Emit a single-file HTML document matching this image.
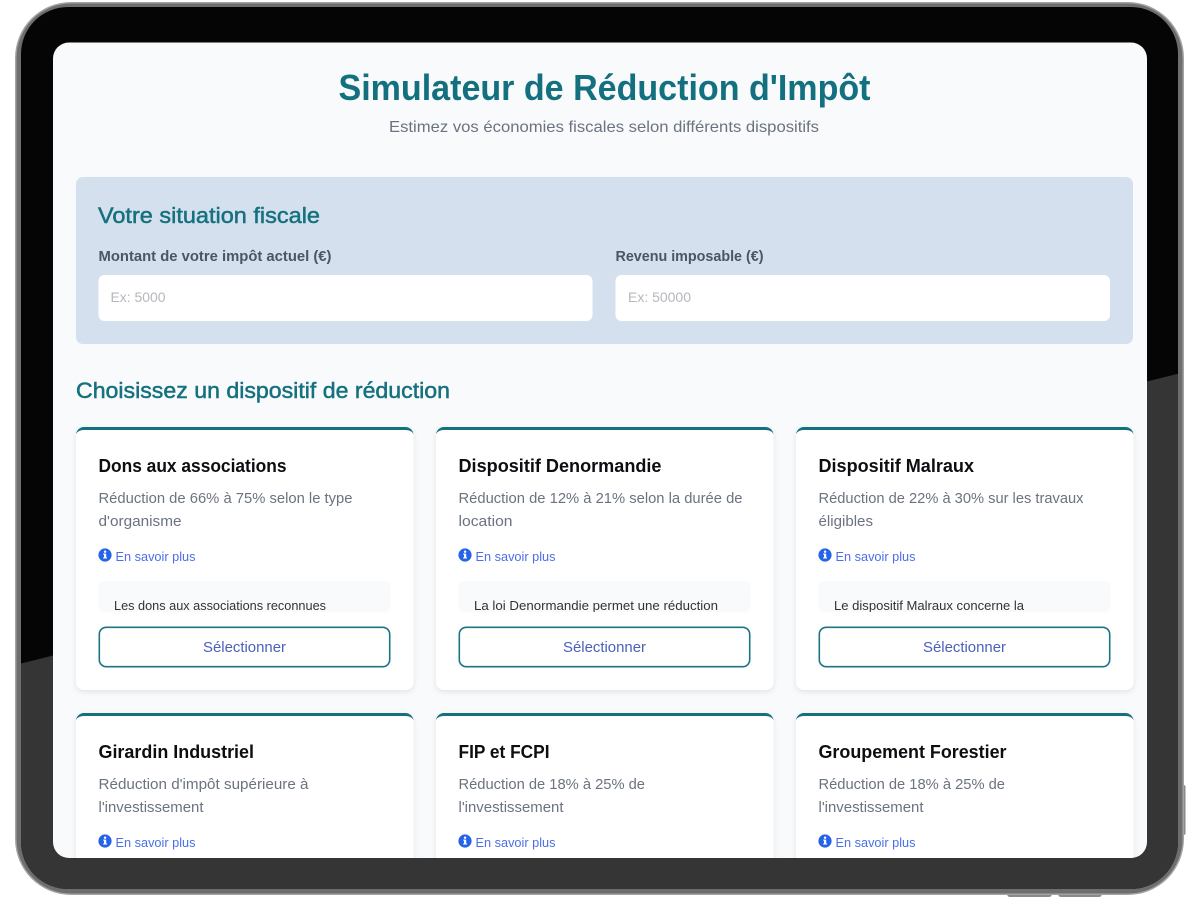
<!DOCTYPE html>
<html lang="fr"><head><meta charset="utf-8"><title>Simulateur de Réduction d'Impôt</title>
<style>
html,body{margin:0;padding:0;width:1200px;height:900px;background:#fff;overflow:hidden}
svg{display:block;font-family:"Liberation Sans",sans-serif;filter:blur(.35px)}
.h{font-size:18px;font-weight:700;fill:#0d0d12}
.d{font-size:14.5px;fill:#6b7280}
.l{font-size:12.5px;fill:#4c6ee8}
.t{font-size:12.5px;fill:#333}
.b{font-size:14.5px;fill:#4a62b5}
</style></head><body>
<svg width="1200" height="900" viewBox="0 0 1200 900" xmlns="http://www.w3.org/2000/svg">
<defs>
<clipPath id="screen"><rect x="53" y="42.5" width="1094" height="815.5" rx="16"/></clipPath>
<clipPath id="body"><rect x="21" y="7" width="1157" height="882" rx="47"/></clipPath>
<filter id="sh" x="-10%" y="-10%" width="120%" height="120%"><feDropShadow dx="0" dy="2" stdDeviation="3" flood-color="#000" flood-opacity=".09"/></filter>
<clipPath id="c1"><rect x="98" y="581" width="293" height="31"/></clipPath>
<g id="info"><circle cx="0" cy="0" r="6.6" fill="#2563eb"/><rect x="-1" y="-1.3" width="2.2" height="4.6" fill="#fff"/><rect x="-1.9" y="2.4" width="3.9" height="1.1" fill="#fff"/><rect x="-1.9" y="-1.4" width="2" height="1" fill="#fff"/><circle cx="0.1" cy="-3.3" r="1.2" fill="#fff"/></g>
</defs>

<!-- device -->
<rect x="1007" y="888" width="45" height="9" rx="3" fill="#8a8a8a"/>
<rect x="1058" y="888" width="44" height="9" rx="3" fill="#8a8a8a"/>
<rect x="1180" y="785" width="5.5" height="50" rx="2" fill="#8a8a8a"/>
<rect x="15" y="2" width="1169" height="893" rx="56" fill="#a3a3a3"/>
<rect x="16.5" y="3.5" width="1166" height="890" rx="54.5" fill="#6e6e6e"/>
<rect x="21" y="7" width="1157" height="882" rx="47" fill="#050505"/>
<polygon clip-path="url(#body)" points="15,665 1185,372 1185,900 15,900" fill="#353535"/>

<!-- screen -->
<g clip-path="url(#screen)">
<rect x="53" y="42" width="1094" height="816" fill="#f8fafc"/>
<text x="338.5" y="100" font-size="36" font-weight="700" fill="#13707f" textLength="532" lengthAdjust="spacingAndGlyphs">Simulateur de Réduction d'Impôt</text>
<text x="389" y="132" font-size="16" fill="#6b7280" textLength="430" lengthAdjust="spacingAndGlyphs">Estimez vos économies fiscales selon différents dispositifs</text>

<rect x="76" y="177" width="1057" height="167" rx="7" fill="#d5e0ee"/>
<text x="98" y="223" font-size="22.4" fill="#16717f" font-weight="400" stroke="#16717f" stroke-width=".5" textLength="222" lengthAdjust="spacingAndGlyphs">Votre situation fiscale</text>
<text x="98.5" y="261" font-size="14.4" font-weight="700" fill="#4b5563" textLength="233" lengthAdjust="spacingAndGlyphs">Montant de votre impôt actuel (€)</text>
<text x="615.5" y="261" font-size="14.4" font-weight="700" fill="#4b5563" textLength="148" lengthAdjust="spacingAndGlyphs">Revenu imposable (€)</text>
<rect x="98.5" y="275" width="494" height="46" rx="6" fill="#fff"/>
<rect x="615.5" y="275" width="494.5" height="46" rx="6" fill="#fff"/>
<text x="110.5" y="302" font-size="14" fill="#b4b7bc" textLength="55" lengthAdjust="spacingAndGlyphs">Ex: 5000</text>
<text x="628" y="302" font-size="14" fill="#b4b7bc" textLength="63" lengthAdjust="spacingAndGlyphs">Ex: 50000</text>

<text x="76" y="398" font-size="22.4" fill="#16717f" stroke="#16717f" stroke-width=".5" textLength="374" lengthAdjust="spacingAndGlyphs">Choisissez un dispositif de réduction</text>

<!-- row 1 -->
<g>
<rect x="76" y="427" width="337.5" height="263" rx="8" fill="#fff" filter="url(#sh)"/>
<path d="M76 435a8 8 0 0 1 8-8h321.5a8 8 0 0 1 8 8a8 5 0 0 0-8-5H84a8 5 0 0 0-8 5z" fill="#16717f"/>
<text class="h" x="98.5" y="472" textLength="188" lengthAdjust="spacingAndGlyphs">Dons aux associations</text>
<text class="d" x="98.5" y="503" textLength="254" lengthAdjust="spacingAndGlyphs">Réduction de 66% à 75% selon le type</text>
<text class="d" x="98.5" y="526" textLength="83" lengthAdjust="spacingAndGlyphs">d'organisme</text>
<use href="#info" x="105" y="555"/>
<text class="l" x="115.5" y="561" textLength="80" lengthAdjust="spacingAndGlyphs">En savoir plus</text>
<rect x="98.5" y="581" width="292" height="31" rx="6" fill="#f8fafb"/>
<text class="t" x="114" y="610" clip-path="url(#c1)" textLength="212" lengthAdjust="spacingAndGlyphs">Les dons aux associations reconnues</text>
<rect x="99.3" y="627.3" width="290.4" height="39.4" rx="7" fill="#fff" stroke="#1b7386" stroke-width="1.6"/>
<text class="b" x="203" y="652" textLength="83" lengthAdjust="spacingAndGlyphs">Sélectionner</text>
</g>
<g transform="translate(360 0)">
<rect x="76" y="427" width="337.5" height="263" rx="8" fill="#fff" filter="url(#sh)"/>
<path d="M76 435a8 8 0 0 1 8-8h321.5a8 8 0 0 1 8 8a8 5 0 0 0-8-5H84a8 5 0 0 0-8 5z" fill="#16717f"/>
<text class="h" x="98.5" y="472" textLength="203" lengthAdjust="spacingAndGlyphs">Dispositif Denormandie</text>
<text class="d" x="98.5" y="503" textLength="284" lengthAdjust="spacingAndGlyphs">Réduction de 12% à 21% selon la durée de</text>
<text class="d" x="98.5" y="526" textLength="54" lengthAdjust="spacingAndGlyphs">location</text>
<use href="#info" x="105" y="555"/>
<text class="l" x="115.5" y="561" textLength="80" lengthAdjust="spacingAndGlyphs">En savoir plus</text>
<rect x="98.5" y="581" width="292" height="31" rx="6" fill="#f8fafb"/>
<text class="t" x="114" y="610" clip-path="url(#c1)" textLength="244" lengthAdjust="spacingAndGlyphs">La loi Denormandie permet une réduction</text>
<rect x="99.3" y="627.3" width="290.4" height="39.4" rx="7" fill="#fff" stroke="#1b7386" stroke-width="1.6"/>
<text class="b" x="203" y="652" textLength="83" lengthAdjust="spacingAndGlyphs">Sélectionner</text>
</g>
<g transform="translate(720 0)">
<rect x="76" y="427" width="337.5" height="263" rx="8" fill="#fff" filter="url(#sh)"/>
<path d="M76 435a8 8 0 0 1 8-8h321.5a8 8 0 0 1 8 8a8 5 0 0 0-8-5H84a8 5 0 0 0-8 5z" fill="#16717f"/>
<text class="h" x="98.5" y="472" textLength="155.5" lengthAdjust="spacingAndGlyphs">Dispositif Malraux</text>
<text class="d" x="98.5" y="503" textLength="265" lengthAdjust="spacingAndGlyphs">Réduction de 22% à 30% sur les travaux</text>
<text class="d" x="98.5" y="526" textLength="54.5" lengthAdjust="spacingAndGlyphs">éligibles</text>
<use href="#info" x="105" y="555"/>
<text class="l" x="115.5" y="561" textLength="80" lengthAdjust="spacingAndGlyphs">En savoir plus</text>
<rect x="98.5" y="581" width="292" height="31" rx="6" fill="#f8fafb"/>
<text class="t" x="114" y="610" clip-path="url(#c1)" textLength="190" lengthAdjust="spacingAndGlyphs">Le dispositif Malraux concerne la</text>
<rect x="99.3" y="627.3" width="290.4" height="39.4" rx="7" fill="#fff" stroke="#1b7386" stroke-width="1.6"/>
<text class="b" x="203" y="652" textLength="83" lengthAdjust="spacingAndGlyphs">Sélectionner</text>
</g>

<!-- row 2 -->
<g transform="translate(0 286)">
<rect x="76" y="427" width="337.5" height="165" rx="8" fill="#fff" filter="url(#sh)"/>
<path d="M76 435a8 8 0 0 1 8-8h321.5a8 8 0 0 1 8 8a8 5 0 0 0-8-5H84a8 5 0 0 0-8 5z" fill="#16717f"/>
<text class="h" x="98.5" y="472" textLength="155.5" lengthAdjust="spacingAndGlyphs">Girardin Industriel</text>
<text class="d" x="98.5" y="503" textLength="210" lengthAdjust="spacingAndGlyphs">Réduction d'impôt supérieure à</text>
<text class="d" x="98.5" y="526" textLength="105" lengthAdjust="spacingAndGlyphs">l'investissement</text>
<use href="#info" x="105" y="555"/>
<text class="l" x="115.5" y="561" textLength="80" lengthAdjust="spacingAndGlyphs">En savoir plus</text>
</g>
<g transform="translate(360 286)">
<rect x="76" y="427" width="337.5" height="165" rx="8" fill="#fff" filter="url(#sh)"/>
<path d="M76 435a8 8 0 0 1 8-8h321.5a8 8 0 0 1 8 8a8 5 0 0 0-8-5H84a8 5 0 0 0-8 5z" fill="#16717f"/>
<text class="h" x="98.5" y="472" textLength="91" lengthAdjust="spacingAndGlyphs">FIP et FCPI</text>
<text class="d" x="98.5" y="503" textLength="186.5" lengthAdjust="spacingAndGlyphs">Réduction de 18% à 25% de</text>
<text class="d" x="98.5" y="526" textLength="105" lengthAdjust="spacingAndGlyphs">l'investissement</text>
<use href="#info" x="105" y="555"/>
<text class="l" x="115.5" y="561" textLength="80" lengthAdjust="spacingAndGlyphs">En savoir plus</text>
</g>
<g transform="translate(720 286)">
<rect x="76" y="427" width="337.5" height="165" rx="8" fill="#fff" filter="url(#sh)"/>
<path d="M76 435a8 8 0 0 1 8-8h321.5a8 8 0 0 1 8 8a8 5 0 0 0-8-5H84a8 5 0 0 0-8 5z" fill="#16717f"/>
<text class="h" x="98.5" y="472" textLength="188" lengthAdjust="spacingAndGlyphs">Groupement Forestier</text>
<text class="d" x="98.5" y="503" textLength="186.5" lengthAdjust="spacingAndGlyphs">Réduction de 18% à 25% de</text>
<text class="d" x="98.5" y="526" textLength="105" lengthAdjust="spacingAndGlyphs">l'investissement</text>
<use href="#info" x="105" y="555"/>
<text class="l" x="115.5" y="561" textLength="80" lengthAdjust="spacingAndGlyphs">En savoir plus</text>
</g>
</g>
</svg>
</body></html>
